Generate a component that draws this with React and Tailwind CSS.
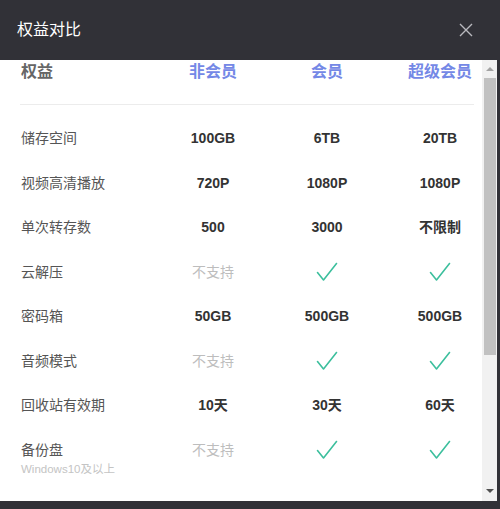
import React from "react";

const font = { fontFamily: '"Liberation Sans", "Noto Sans CJK SC", sans-serif' };

const rows = [
  { label: "储存空间", vals: ["100GB", "6TB", "20TB"] },
  { label: "视频高清播放", vals: ["720P", "1080P", "1080P"] },
  { label: "单次转存数", vals: ["500", "3000", "不限制"] },
  { label: "云解压", vals: [null, true, true] },
  { label: "密码箱", vals: ["50GB", "500GB", "500GB"] },
  { label: "音频模式", vals: [null, true, true] },
  { label: "回收站有效期", vals: ["10天", "30天", "60天"] },
  { label: "备份盘", sub: "Windows10及以上", vals: [null, true, true] },
];

function Check() {
  return (
    <svg width="22" height="20" viewBox="0 0 22 20" className="block">
      <path d="M1.5 10.5 L7.5 18 L20.5 1.5" fill="none" stroke="#3cbf9d" strokeWidth="1.6" strokeLinecap="round" strokeLinejoin="round" />
    </svg>
  );
}

function Cell({ v }) {
  if (v === null) return <span className="text-[14px] text-[#bdbdbd]">不支持</span>;
  if (v === true)
    return (
      <span className="flex h-[20px] items-center">
        <Check />
      </span>
    );
  return <span className="text-[14px] font-bold text-[#333]">{v}</span>;
}

export default function App() {
  return (
    <div className="w-[500px] h-[509px] bg-[#313137] flex flex-col" style={font}>
      {/* header */}
      <div className="h-[60px] flex items-center justify-between pl-[17px] pr-[27px]">
        <div className="text-[16px] text-white">权益对比</div>
        <svg width="14" height="14" viewBox="0 0 14 14">
          <path d="M1 1 L13 13 M13 1 L1 13" stroke="#b9b9be" strokeWidth="1.4" />
        </svg>
      </div>

      {/* body */}
      <div className="flex-1 flex min-h-0">
        <div className="flex-1 bg-white overflow-hidden pl-[20px]">
          <div className="grid grid-cols-[136px_114px_114px_112px] leading-[24px] text-[16px] font-bold">
            <div className="pl-[1px] text-[#666]">权益</div>
            <div className="text-center text-[#7488e6]">非会员</div>
            <div className="text-center text-[#7488e6]">会员</div>
            <div className="text-center text-[#7488e6]">超级会员</div>
          </div>
          <div className="w-[454px] h-px bg-[#ececec] mt-[20px] mb-[10.75px]" />
          {rows.map((r) => (
            <div key={r.label} className="grid grid-cols-[136px_114px_114px_112px] items-start py-[12.25px] leading-[20px]">
              <div className="pl-[1px]">
                <div className="text-[14px] text-[#555]">{r.label}</div>
                {r.sub && <div className="text-[11.5px] leading-[18px] text-[#c4c4c4]">{r.sub}</div>}
              </div>
              {r.vals.map((v, i) => (
                <div key={i} className="flex justify-center">
                  <Cell v={v} />
                </div>
              ))}
            </div>
          ))}
        </div>

        {/* scrollbar */}
        <div className="w-[15px] bg-[#f1f1f1] flex flex-col items-center">
          <div className="h-[18px] flex items-center justify-center">
            <div className="w-0 h-0 border-l-[4px] border-r-[4px] border-b-[4px] border-l-transparent border-r-transparent border-b-[#a3a3a3]" />
          </div>
          <div className="w-[12px] h-[277px] bg-[#c1c1c1]" />
          <div className="flex-1" />
          <div className="h-[20px] flex items-center justify-center">
            <div className="w-0 h-0 border-l-[4px] border-r-[4px] border-t-[4px] border-l-transparent border-r-transparent border-t-[#505050]" />
          </div>
        </div>
        <div className="w-[3px]" />
      </div>

      <div className="h-[8px]" />
    </div>
  );
}
